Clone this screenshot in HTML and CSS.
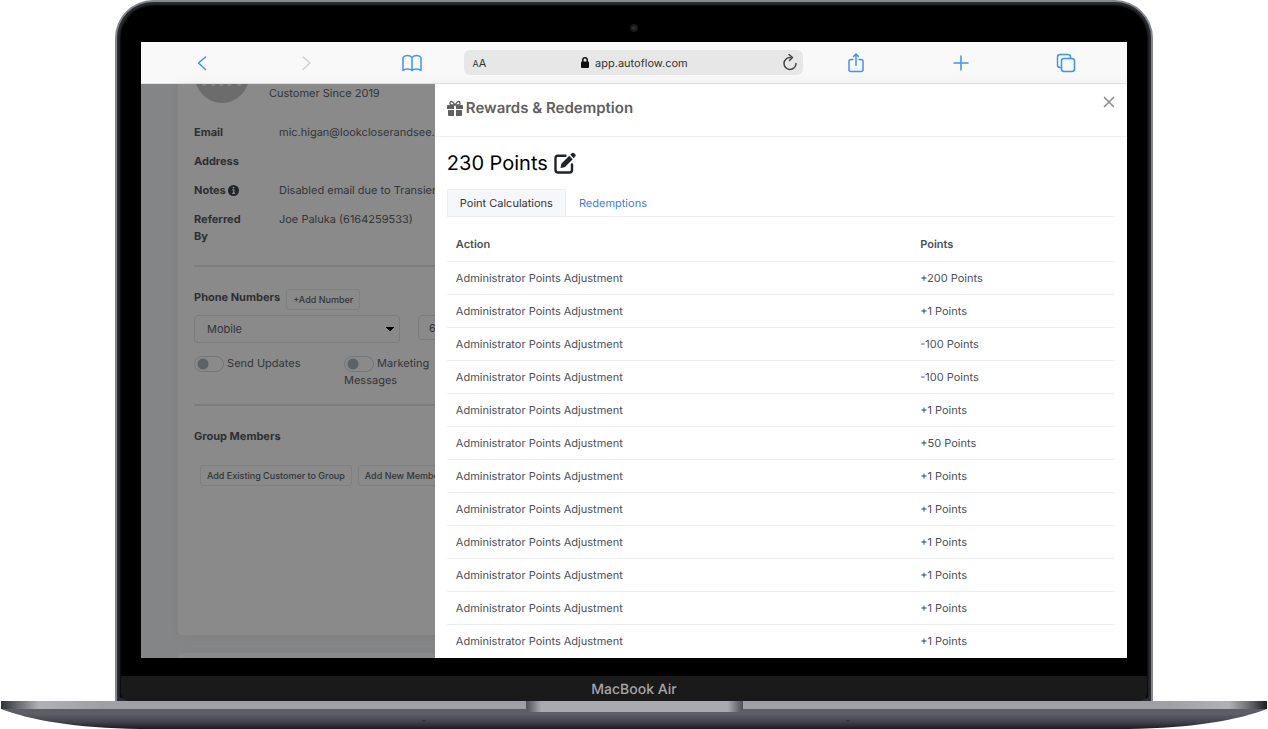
FILE: index.html
```html
<!DOCTYPE html>
<html lang="en">
<head>
    <meta charset="UTF-8">
    <meta name="viewport" content="width=device-width, initial-scale=1.0">
    <title>Rewards &amp; Redemption</title>
    <link rel="stylesheet" href="styles.css">
</head>
<body>
    <div class="laptop">
        <div class="lid">
            <div class="camera"></div>

            <div class="screen">
                <div class="browser-bar">
                    <button type="button" aria-label="Back">
                        <svg width="20" height="20" viewBox="0 0 20 20"><path d="M13.5 4 L6.5 10 L13.5 16.5"/></svg>
                    </button>
                    <button type="button" class="disabled" aria-label="Forward">
                        <svg width="20" height="20" viewBox="0 0 20 20"><path d="M6 4 L13 10 L6 16.5"/></svg>
                    </button>
                    <button type="button" aria-label="Bookmarks">
                        <svg width="20" height="20" viewBox="0 0 20 20"><path d="M10 4.500 C8.500 1.800 2.500 1.600 1 4.500 V17.500 C3 15.500 8.500 15.500 10 17.500 C11.500 15.500 17 15.500 19 17.500 V4.500 C17.500 1.600 11.500 1.800 10 4.500 V17.500"/></svg>
                    </button>
                    <div class="address">
                        <button type="button" class="text-size"><small>A</small>A</button>
                        <span class="url">
                            <svg width="8" height="11" viewBox="0 0 8 11"><rect x="0" y="4.500" width="8" height="6.500" rx="1"/><path d="M1.800 5 V3 A2.200 2.200 0 0 1 6.200 3 V5"/></svg>
                            app.autoflow.com
                        </span>
                        <button type="button" class="reload" aria-label="Reload">
                            <svg width="16" height="18" viewBox="0 0 16 18"><path d="M8.500 3.500 A6 6 0 1 0 14 9.500"/><path d="M7 0.500 L10.500 3.500 L7.500 6.500"/></svg>
                        </button>
                    </div>
                    <button type="button" aria-label="Share">
                        <svg width="20" height="20" viewBox="0 0 20 20"><path d="M7 6.500 H5 Q3 6.500 3 8.500 V16.500 Q3 18.500 5 18.500 H15 Q17 18.500 17 16.500 V8.500 Q17 6.500 15 6.500 H13 M10 12.500 V1.500 M7.500 3.500 L10 1 L12.500 3.500"/></svg>
                    </button>
                    <button type="button" aria-label="New tab">
                        <svg width="20" height="20" viewBox="0 0 20 20"><path d="M10 3 V17 M3 10 H17"/></svg>
                    </button>
                    <button type="button" aria-label="Show tabs">
                        <svg width="20" height="20" viewBox="0 0 20 20"><rect x="5.500" y="5.500" width="13" height="13" rx="2.500"/><path d="M5.500 14.500 H4 Q1.500 14.500 1.500 12 V4 Q1.500 1.500 4 1.500 H12 Q14.500 1.500 14.500 4 V5.500"/></svg>
                    </button>
                </div>

                <div class="viewport">
                    <div class="page">
                        <div class="card">
                            <div class="customer">
                                <svg width="54" height="20" viewBox="0 0 54 20"><path d="M0 -8 A27 27 0 0 0 54 -8 Z" fill="#c8c8c8"/><path d="M7 0 h5 l-2 2 h-2 Z M16 0 h5 l-2 2 h-2 Z M24 0 h5 l-2 2 h-2 Z M32 0 h5 l-2 2 h-2 Z M42 0 h5 l-2 2 h-2 Z" fill="#eee"/></svg>
                                <span>Customer Since 2019</span>
                            </div>

                            <dl class="details">
                                <dt>Email</dt>
                                <dd>mic.higan@lookcloserandsee.com</dd>
                                <dt>Address</dt>
                                <dd></dd>
                                <dt>Notes
                                    <svg width="11" height="11" viewBox="0 0 11 11"><circle cx="5.500" cy="5.500" r="5.500" fill="#41434a"/><path d="M4.300 4.800 H5.800 V8.300 M4 8.300 H7.200" stroke="#fff" stroke-width="1.200" fill="none"/><circle cx="5.500" cy="2.700" r="0.900" fill="#fff"/></svg>
                                </dt>
                                <dd>Disabled email due to Transient</dd>
                                <dt>Referred By</dt>
                                <dd>Joe Paluka (6164259533)</dd>
                            </dl>

                            <section class="phones">
                                <div class="phones-head">
                                    <h3>Phone Numbers</h3>
                                    <button type="button" class="btn">+Add Number</button>
                                </div>
                                <div class="phone-row">
                                    <select aria-label="Phone type">
                                        <option>Mobile</option>
                                    </select>
                                    <input type="text" aria-label="Phone number" value="6164259533">
                                </div>
                                <div class="switches">
                                    <label><input type="checkbox"> Send Updates</label>
                                    <label><input type="checkbox"> Marketing Messages</label>
                                </div>
                            </section>

                            <section class="group">
                                <h3>Group Members</h3>
                                <div class="group-buttons">
                                    <button type="button" class="btn">Add Existing Customer to Group</button>
                                    <button type="button" class="btn">Add New Member</button>
                                </div>
                            </section>
                        </div>
                        <div class="card next-card"></div>
                    </div>

                    <div class="backdrop"></div>

                    <div class="drawer">
                        <div class="drawer-head">
                            <h2>
                                <svg width="16" height="16" viewBox="0 0 16 16"><path d="M1 5 H7 V9 H0 V6 Q0 5 1 5 Z M9 5 H15 Q16 5 16 6 V9 H9 Z M1 10 H7 V16 H2 Q1 16 1 15 Z M9 10 H15 V15 Q15 16 14 16 H9 Z" fill="#606060"/><path d="M7.500 5 H4.500 C2.400 5 2.600 1.500 4.500 1.500 C6 1.500 7 3.500 8 5 C9 3.500 10 1.500 11.500 1.500 C13.400 1.500 13.600 5 11.500 5 Z" fill="none" stroke="#606060" stroke-width="1.400"/></svg>
                                Rewards &amp; Redemption
                            </h2>
                            <button type="button" class="close" aria-label="Close">
                                <svg width="12" height="12" viewBox="0 0 12 12"><path d="M1 1 L11 11 M11 1 L1 11"/></svg>
                            </button>
                        </div>

                        <div class="drawer-body">
                            <div class="total">
                                <span>230 Points</span>
                                <button type="button" aria-label="Edit points">
                                    <svg width="22" height="22" viewBox="0 0 22 22"><path d="M11.500 3.800 H4 Q1.500 3.800 1.500 6.300 V18 Q1.500 20.500 4 20.500 H15.500 Q18 20.500 18 18 V12.500" fill="none" stroke="#212529" stroke-width="2.400" stroke-linecap="round"/><path d="M6.500 16 L7.300 11.800 L15.300 3.800 L18.700 7.200 L10.700 15.200 Z M16.300 2.800 L18 1.100 Q19 0.200 20.100 1.200 L21.200 2.300 Q22.200 3.400 21.200 4.500 L19.600 6.200 Z" fill="#212529"/></svg>
                                </button>
                            </div>

                            <div class="tabs">
                                <a href="#" class="active">Point Calculations</a>
                                <a href="#">Redemptions</a>
                            </div>

                            <table>
                                <thead>
                                    <tr><th>Action</th><th>Points</th></tr>
                                </thead>
                                <tbody>
                                    <tr><td>Administrator Points Adjustment</td><td>+200 Points</td></tr>
                                    <tr><td>Administrator Points Adjustment</td><td>+1 Points</td></tr>
                                    <tr><td>Administrator Points Adjustment</td><td>-100 Points</td></tr>
                                    <tr><td>Administrator Points Adjustment</td><td>-100 Points</td></tr>
                                    <tr><td>Administrator Points Adjustment</td><td>+1 Points</td></tr>
                                    <tr><td>Administrator Points Adjustment</td><td>+50 Points</td></tr>
                                    <tr><td>Administrator Points Adjustment</td><td>+1 Points</td></tr>
                                    <tr><td>Administrator Points Adjustment</td><td>+1 Points</td></tr>
                                    <tr><td>Administrator Points Adjustment</td><td>+1 Points</td></tr>
                                    <tr><td>Administrator Points Adjustment</td><td>+1 Points</td></tr>
                                    <tr><td>Administrator Points Adjustment</td><td>+1 Points</td></tr>
                                    <tr><td>Administrator Points Adjustment</td><td>+1 Points</td></tr>
                                </tbody>
                            </table>
                        </div>
                    </div>
                </div>
            </div>

            <div class="chin">MacBook Air</div>
        </div>

        <svg class="base" viewBox="0 0 1268 28" preserveAspectRatio="none">
            <defs>
                <linearGradient id="deck" x1="0" x2="1" y1="0" y2="0">
                    <stop offset="0" stop-color="#33343a"/>
                    <stop offset="0.015" stop-color="#6f7076"/>
                    <stop offset="0.030" stop-color="#b0b1b6"/>
                    <stop offset="0.080" stop-color="#9fa0a6"/>
                    <stop offset="0.920" stop-color="#9fa0a6"/>
                    <stop offset="0.970" stop-color="#b0b1b6"/>
                    <stop offset="0.985" stop-color="#6f7076"/>
                    <stop offset="1" stop-color="#1c1c22"/>
                </linearGradient>
                <linearGradient id="under" x1="0" x2="0" y1="0" y2="1">
                    <stop offset="0.250" stop-color="#5d5e65"/>
                    <stop offset="0.650" stop-color="#42434c"/>
                    <stop offset="1" stop-color="#181924"/>
                </linearGradient>
                <linearGradient id="notch" x1="0" x2="1" y1="0" y2="0">
                    <stop offset="0" stop-color="#4e4f57"/>
                    <stop offset="0.070" stop-color="#a9aab0"/>
                    <stop offset="0.930" stop-color="#a9aab0"/>
                    <stop offset="1" stop-color="#4e4f57"/>
                </linearGradient>
            </defs>
            <path d="M1 8 C30 19 75 27 140 28 H1128 C1193 27 1238 19 1267 8 Z" fill="url(#under)"/>
            <rect x="1" y="0" width="1266" height="8" fill="url(#deck)"/>
            <path d="M526 0 H743 V7 Q743 11 738 11 H531 Q526 11 526 7 Z" fill="url(#notch)"/>
            <path d="M422 20 h4 M846 20 h4" stroke="#373841" stroke-width="2"/>
        </svg>
    </div>
</body>
</html>
```

FILE: styles.css
```css
* {
    box-sizing: border-box;
}

body {
    margin: 0;
    background: #fff;
    font-family: Inter, "Liberation Sans", sans-serif;
    font-size: 11px;
    color: #495057;
    text-rendering: geometricPrecision;
}

h2,
h3,
dl,
dd {
    margin: 0;
}

button {
    padding: 0;
    border: none;
    background: none;
    font-family: inherit;
    color: inherit;
    cursor: pointer;
}

svg {
    display: block;
}

.laptop {
    overflow: hidden;
}

/* Lid */
.lid {
    margin: 0 115px;
    padding: 0 24px;
    background: #000;
    border: 2px solid #85888e;
    border-bottom: none;
    border-radius: 38px 38px 0 0;
    box-shadow: inset 0 0 2px 3px #2a2c2f;
}

.camera {
    width: 8px;
    height: 8px;
    margin: 22px auto 10px;
    border: 2px solid #1a1a1c;
    border-radius: 50%;
    background: #2c2d31;
}

.screen {
    background: #fff;
    overflow: hidden;
}

.chin {
    height: 25px;
    margin: 18px -20px 0;
    background: #1a1a1a;
    border-radius: 0 0 8px 8px;
    color: #a6a6ac;
    font-size: 14px;
    font-weight: 500;
    line-height: 27px;
    text-align: center;
}

.base {
    width: 100%;
    height: 28px;
}

/* Browser toolbar */
.browser-bar {
    display: grid;
    grid-template-columns: repeat(3, 1fr) 339px repeat(3, 1fr);
    align-items: center;
    justify-items: center;
    height: 42px;
    padding: 0 8px;
    background: #f9f9f9;
    border-bottom: 1px solid #e4e4e4;
}

.browser-bar svg {
    fill: none;
    stroke: #3b93fb;
    stroke-width: 1.5;
    stroke-linecap: round;
    stroke-linejoin: round;
}

.browser-bar .disabled svg {
    stroke: #d0d0d0;
}

.address {
    display: flex;
    align-items: center;
    justify-content: space-between;
    width: 100%;
    height: 25px;
    padding: 0 5px 0 8px;
    background: #e7e7e7;
    border-radius: 6px;
    color: #333;
}

.text-size {
    font-size: 11px;
}

.text-size small {
    font-size: 9px;
}

.url {
    display: flex;
    align-items: center;
    gap: 6px;
}

.browser-bar .url svg {
    fill: #111;
    stroke: none;
}

.browser-bar .url path {
    fill: none;
    stroke: #111;
}

.browser-bar .reload svg {
    stroke: #444;
}

/* The page, its backdrop and the drawer share one grid cell */
.viewport {
    display: grid;
    grid-template-columns: 100%;
}

.page,
.backdrop,
.drawer {
    grid-area: 1 / 1;
}

.backdrop {
    background: rgba(0, 0, 0, 0.46);
    z-index: 1;
}

/* Customer page */
.page {
    display: flex;
    flex-direction: column;
    gap: 18px;
    padding-left: 37px;
    background: #f4f6f9;
    color: #60646b;
}

.card {
    height: 551px;
    padding: 0 16px;
    background: #fff;
    border-radius: 0 0 4px 4px;
    box-shadow: 0 0 14px rgba(0, 0, 0, 0.06);
}

.next-card {
    height: 5px;
    border-radius: 4px 4px 0 0;
}

.customer {
    display: flex;
    gap: 20px;
    height: 40px;
    padding-left: 1px;
    line-height: 18px;
}

.details {
    display: grid;
    grid-template-columns: 50px 1fr;
    column-gap: 35px;
    row-gap: 12px;
    padding-bottom: 20px;
    border-bottom: 2px solid #e4e7ea;
    line-height: 17px;
    white-space: nowrap;
}

.details dt {
    font-weight: 700;
    color: #56585d;
    white-space: normal;
}

.details dt svg {
    display: inline-block;
    vertical-align: -2px;
}

.page h3 {
    font-size: 11px;
    font-weight: 700;
    line-height: 17px;
    color: #56585d;
}

.phones {
    height: 139px;
    padding-top: 22px;
    border-bottom: 2px solid #e4e7ea;
}

.phones-head {
    display: flex;
    gap: 6px;
}

.btn {
    height: 21px;
    padding: 0 6px;
    border: 1px solid #e9ecef;
    border-radius: 3px;
    font-size: 9px;
    font-weight: 500;
}

.phone-row {
    display: flex;
    gap: 18px;
    align-items: flex-start;
    margin-top: 5px;
}

.phone-row select,
.phone-row input {
    width: 206px;
    height: 28px;
    padding: 0 12px;
    border: 1px solid #e2e6ea;
    border-radius: 4px;
    background: transparent;
    font-family: inherit;
    font-size: 11px;
    color: inherit;
}

.phone-row input {
    height: 25px;
    padding: 0 10px;
}

.phone-row select {
    appearance: none;
    background: conic-gradient(from 315deg at 50% 100%, #000 90deg, transparent 90deg) right 5px center / 8px 4px no-repeat;
}

.switches {
    display: grid;
    grid-template-columns: 150px 90px;
    margin-top: 12px;
    line-height: 16px;
}

.switches input {
    appearance: none;
    width: 30px;
    height: 16px;
    margin: 0;
    border: 1px solid #d5dae0;
    border-radius: 8px;
    background: radial-gradient(circle at 8px 7px, #adb5bd 5px, transparent 6px);
    vertical-align: middle;
}

.group {
    padding-top: 22px;
}

.group-buttons {
    display: flex;
    gap: 6px;
    margin-top: 20px;
    padding-left: 6px;
}

/* Rewards drawer */
.drawer {
    z-index: 2;
    justify-self: end;
    width: 70.2%;
    background: #fff;
}

.drawer-head {
    display: flex;
    align-items: flex-start;
    justify-content: space-between;
    height: 53px;
    padding: 12px 12px 0;
    border-bottom: 1px solid #f0f0f0;
}

.drawer-head h2 {
    display: flex;
    align-items: center;
    gap: 3px;
    font-size: 15px;
    font-weight: 600;
    line-height: 24px;
    color: #606060;
}

.close svg {
    fill: none;
    stroke: #8a8a8a;
    stroke-width: 1.5;
}

.drawer-body {
    padding: 10px 12px 0;
}

.total {
    display: flex;
    align-items: center;
    gap: 6px;
    font-size: 20px;
    line-height: 32px;
    color: #000;
}

.tabs {
    display: flex;
    margin-top: 10px;
    border-bottom: 1px solid #eceef1;
}

.tabs a {
    padding: 0 12px;
    border: 1px solid transparent;
    border-bottom: none;
    line-height: 26px;
    color: #3b7ddd;
    text-decoration: none;
}

.tabs .active {
    background: #f5f7fb;
    border-color: #eceef1;
    color: #333;
}

table {
    width: 100%;
    margin-top: 11px;
    border-collapse: collapse;
    table-layout: fixed;
}

th,
td {
    height: 33px;
    padding: 0 9px;
    border-bottom: 1px solid #eceef0;
    text-align: left;
}

th {
    font-weight: 600;
}

th:first-child {
    width: 69.5%;
}

tbody tr:last-child td {
    border-bottom: none;
}
```
